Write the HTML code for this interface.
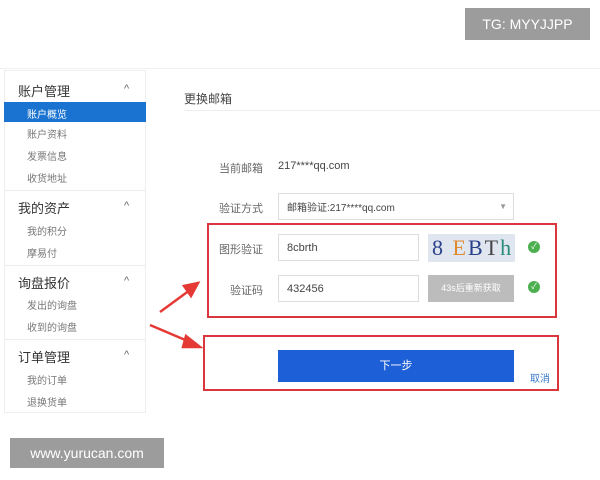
<!DOCTYPE html><html><head><meta charset="utf-8"><style>
*{margin:0;padding:0;box-sizing:border-box}
body{width:600px;height:480px;background:#fff;position:relative;overflow:hidden;font-family:"Liberation Sans","Noto Sans CJK SC",sans-serif;color:#555}
.a{position:absolute}
.side{left:4px;top:70px;width:142px;height:343px;border:1px solid #eee;background:#fff}
.h{font-size:13px;color:#333;left:18px}
.i{font-size:10px;color:#777;left:27px}
.car{font-size:11px;color:#666;left:124px}
.sep{left:4px;width:142px;height:1px;background:#ececec}
.inp{border:1px solid #ddd;background:#fff;font-size:11px;color:#444;padding-left:8px;display:flex;align-items:center}
.lab{font-size:11px;color:#666;width:80px;text-align:right;left:183px}
.chk{width:12px;height:12px;border-radius:50%;background:#4caf50;color:#fff;font-size:8px;text-align:center;line-height:12px}
</style></head><body>
<div class="a" style="left:465px;top:8px;width:125px;height:32px;background:#9c9c9c;color:#fff;font-size:14px;line-height:32px;text-align:center">TG: MYYJJPP</div>
<div class="a" style="left:0;top:68px;width:600px;height:1px;background:#f0f0f0"></div>
<div class="a side"></div>
<div class="a h" style="top:81px">账户管理</div><div class="a car" style="top:83px">^</div>
<div class="a" style="left:4px;top:102px;width:142px;height:20px;background:#1a73d0"></div>
<div class="a i" style="top:106px;color:#fff">账户概览</div>
<div class="a i" style="top:126px">账户资料</div>
<div class="a i" style="top:148px">发票信息</div>
<div class="a i" style="top:170px">收货地址</div>
<div class="a sep" style="top:190px"></div>
<div class="a h" style="top:198px">我的资产</div><div class="a car" style="top:200px">^</div>
<div class="a i" style="top:223px">我的积分</div>
<div class="a i" style="top:245px">摩易付</div>
<div class="a sep" style="top:265px"></div>
<div class="a h" style="top:273px">询盘报价</div><div class="a car" style="top:275px">^</div>
<div class="a i" style="top:297px">发出的询盘</div>
<div class="a i" style="top:319px">收到的询盘</div>
<div class="a sep" style="top:339px"></div>
<div class="a h" style="top:347px">订单管理</div><div class="a car" style="top:349px">^</div>
<div class="a i" style="top:372px">我的订单</div>
<div class="a i" style="top:394px">退换货单</div>
<div class="a" style="left:184px;top:90px;font-size:12px;color:#444">更换邮箱</div>
<div class="a" style="left:184px;top:110px;width:416px;height:1px;background:#eee"></div>
<div class="a lab" style="top:160px">当前邮箱</div>
<div class="a" style="left:278px;top:160px;font-size:11px;color:#444">217****qq.com</div>
<div class="a lab" style="top:200px">验证方式</div>
<div class="a inp" style="left:278px;top:193px;width:236px;height:27px;font-size:10px">邮箱验证:217****qq.com<span style="position:absolute;right:6px;color:#999;font-size:8px">▼</span></div>
<div class="a" style="left:207px;top:223px;width:350px;height:95px;border:2px solid #d9363e"></div>
<div class="a lab" style="top:241px">图形验证</div>
<div class="a inp" style="left:278px;top:234px;width:141px;height:27px">8cbrth</div>
<div class="a" style="left:428px;top:234px;width:87px;height:28px;background:#dfe6f0;font-size:22px;font-family:'Liberation Serif',serif;line-height:28px;padding-left:4px;letter-spacing:2px"><span style="color:#2a3f8a">8</span> <span style="color:#e08a30">E</span><span style="color:#2a3f8a">B</span><span style="color:#444">T</span><span style="color:#2a8a7a">h</span></div>
<div class="a chk" style="left:528px;top:241px">✓</div>
<div class="a lab" style="top:282px">验证码</div>
<div class="a inp" style="left:278px;top:275px;width:141px;height:27px">432456</div>
<div class="a" style="left:428px;top:275px;width:86px;height:27px;background:#bcbcbc;color:#fff;font-size:9px;line-height:27px;text-align:center">43s后重新获取</div>
<div class="a chk" style="left:528px;top:281px">✓</div>
<div class="a" style="left:203px;top:335px;width:356px;height:56px;border:2px solid #d9363e"></div>
<div class="a" style="left:278px;top:350px;width:236px;height:32px;background:#1d5fd6;color:#fff;font-size:11px;line-height:32px;text-align:center">下一步</div>
<div class="a" style="left:530px;top:370px;font-size:10px;color:#3a78c8">取消</div>
<svg class="a" style="left:140px;top:270px" width="70" height="90"><g fill="#e53935" stroke="#e53935" stroke-width="2.5"><line x1="20" y1="42" x2="50" y2="20"/><polygon points="58,13 44,16 51,26"/><line x1="10" y1="55" x2="50" y2="72"/><polygon points="60,77 46,66 43,77"/></g></svg>
<div class="a" style="left:10px;top:438px;width:154px;height:30px;background:#9c9c9c;color:#fff;font-size:14px;line-height:30px;text-align:center">www.yurucan.com</div>
</body></html>
